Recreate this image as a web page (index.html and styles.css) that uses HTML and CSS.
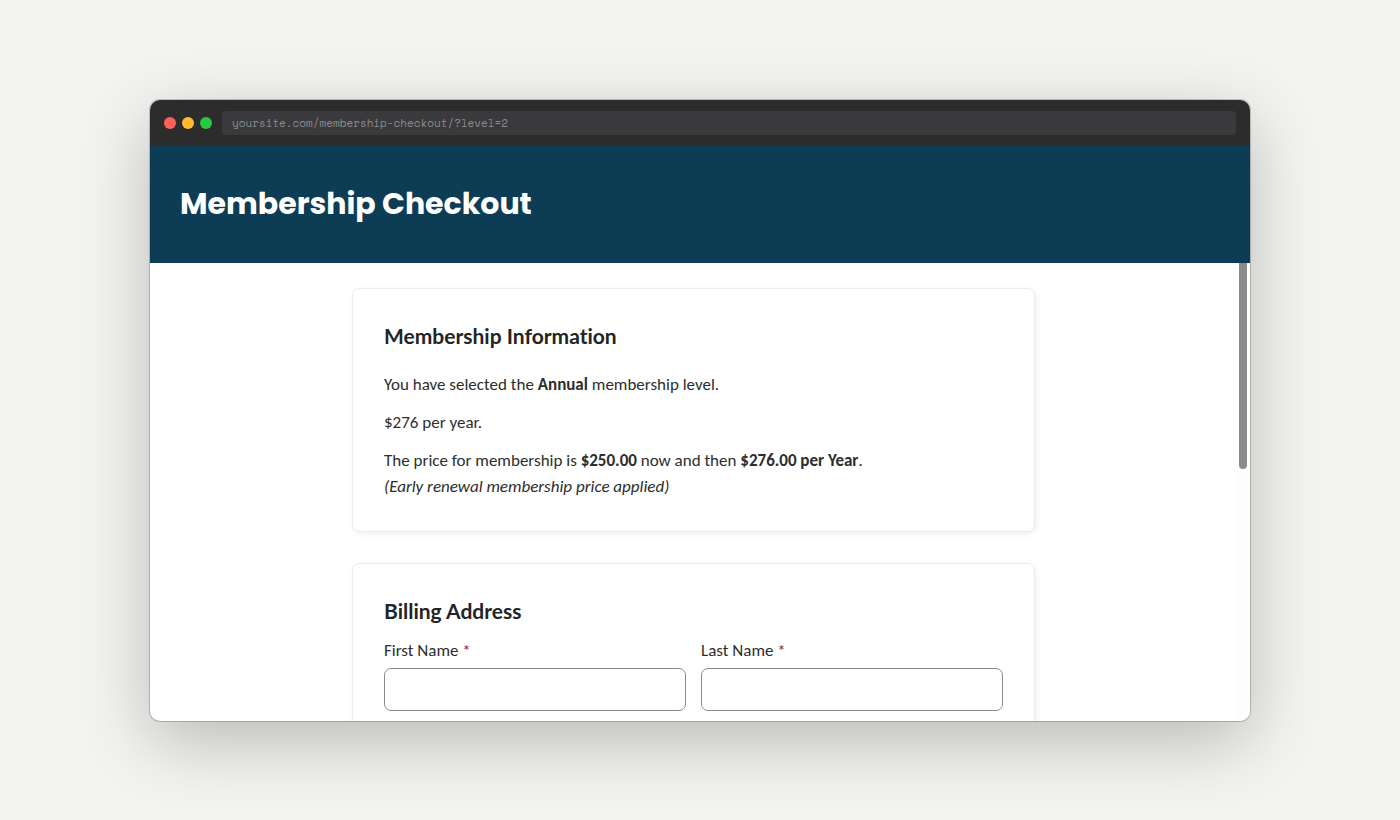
FILE: index.html
```html
<!DOCTYPE html>
<html lang="en">
<head>
    <meta charset="UTF-8">
    <meta name="viewport" content="width=device-width, initial-scale=1.0">
    <title>Membership Checkout</title>
    <link rel="stylesheet" href="styles.css">
</head>
<body>
    <div class="browser">
        <div class="browser-bar">
            <div class="dots">
                <span class="dot red"></span>
                <span class="dot yellow"></span>
                <span class="dot green"></span>
            </div>
            <div class="address">yoursite.com/membership-checkout/?level=2</div>
        </div>

        <header class="page-header">
            <h1>Membership Checkout</h1>
        </header>

        <div class="viewport">
            <main class="content">
                <section class="card">
                    <h2>Membership Information</h2>
                    <div class="level-info">
                        <p>You have selected the <strong>Annual</strong> membership level.</p>
                        <p>$276 per year.</p>
                        <p>The price for membership is <strong>$250.00</strong> now and then <strong>$276.00 per Year</strong>.<br>
                        <em>(Early renewal membership price applied)</em></p>
                    </div>
                </section>

                <section class="card">
                    <h2>Billing Address</h2>
                    <form class="fields">
                        <div class="field">
                            <label for="firstName">First Name <span class="required">*</span></label>
                            <input type="text" id="firstName" name="firstName" required>
                        </div>
                        <div class="field">
                            <label for="lastName">Last Name <span class="required">*</span></label>
                            <input type="text" id="lastName" name="lastName" required>
                        </div>
                    </form>
                </section>
            </main>
            <div class="scroll-track">
                <div class="scroll-thumb"></div>
            </div>
        </div>
    </div>
</body>
</html>
```
FILE: styles.css
```css
* {
    box-sizing: border-box;
}

body {
    margin: 0;
    height: 100vh;
    padding: 100px 150px 99px;
    background: #f3f3f1;
    color: #2d2e2e;
    font-family: Carlito, Lato, sans-serif;
    font-size: 17px;
    line-height: 26px;
    font-variant-ligatures: none;
}

.browser {
    height: 100%;
    display: flex;
    flex-direction: column;
    background: #fff;
    border-radius: 10px;
    overflow: hidden;
    box-shadow: 0 0 0 1px rgba(0, 0, 0, 0.2), 0 20px 68px rgba(0, 0, 0, 0.24);
}

/* Window bar */
.browser-bar {
    flex: none;
    display: flex;
    align-items: center;
    gap: 10px;
    padding: 11px 14px;
    background: #2c2c2d;
}

.dots {
    display: flex;
    gap: 6px;
}

.dot {
    width: 12px;
    height: 12px;
    border-radius: 50%;
}

.red {
    background: #ff5f57;
}

.yellow {
    background: #febc2e;
}

.green {
    background: #28c840;
}

.address {
    flex: 1;
    padding: 0 10px;
    background: #3a3a3c;
    color: #8b8b8d;
    border-radius: 4px;
    font-family: "Space Mono", "Liberation Mono", monospace;
    font-size: 11px;
    line-height: 24px;
}

/* Page title */
.page-header {
    flex: none;
    padding: 34px 30px 35px;
    background: #0d3d54;
    color: #fff;
}

.page-header h1 {
    margin: 0;
    font-family: Poppins, Inter, sans-serif;
    font-size: 30px;
    font-weight: 700;
    line-height: 48px;
}

/* Scrolling area */
.viewport {
    flex: 1;
    min-height: 0;
    display: flex;
    overflow: hidden;
}

.content {
    flex: 1;
    padding: 25px 20px;
}

.scroll-track {
    width: 13px;
    padding: 0 3px 0 2px;
    background: #fdfdfd;
}

.scroll-thumb {
    height: 45%;
    background: #8b8b8b;
    border-radius: 0 0 4px 4px;
}

.card {
    max-width: 683px;
    margin: 0 auto 31px;
    padding: 31px;
    background: #fff;
    border: 1px solid #ebebeb;
    border-radius: 7px;
    box-shadow: 2px 2px 6px rgba(0, 0, 0, 0.06);
}

.card h2 {
    margin: 0 0 11px;
    color: #222425;
    font-family: Lato, sans-serif;
    font-size: 21px;
    font-weight: 700;
    line-height: 32px;
}

.level-info {
    padding-top: 9px;
}

.level-info p {
    margin: 0 0 12px;
}

.level-info p:last-child {
    margin-bottom: 0;
}

/* Billing form */
.fields {
    display: grid;
    grid-template-columns: 1fr 1fr;
    gap: 15px;
}

.field label {
    display: block;
    margin-bottom: 4px;
}

.required {
    color: #8a1f1f;
}

.field input {
    display: block;
    width: 100%;
    height: 43px;
    padding: 8px 12px;
    border: 1px solid #8c8c8c;
    border-radius: 7px;
    background: #fff;
    color: inherit;
    font: inherit;
}
```
